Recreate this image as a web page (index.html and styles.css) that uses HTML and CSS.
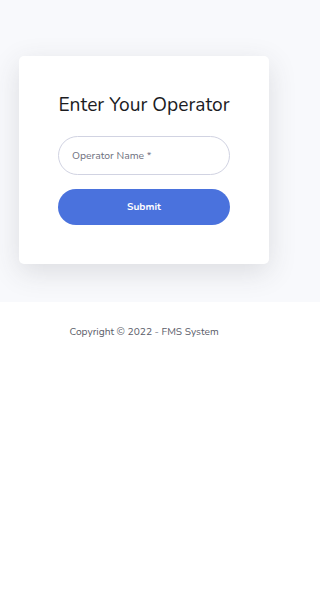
FILE: index.html
```html
<!DOCTYPE html>
<html>
<head>
<meta charset="utf-8">
<link rel="stylesheet" href="styles.css">
</head>
<body>
<main class="top">
  <div class="card">
    <h1 class="title">Enter Your Operator</h1>
    <form class="form">
      <input class="field" type="text" placeholder="Operator Name *">
      <button class="btn" type="button">Submit</button>
    </form>
  </div>
</main>
<footer class="footer">Copyright © 2022 - FMS System</footer>
</body>
</html>
```
FILE: styles.css
```css
html, body {
  margin: 0;
  padding: 0;
  background: #ffffff;
  font-family: "Nunito", "Lato", "Open Sans", sans-serif;
}
.top {
  background: #f8f9fc;
  padding: 56px 0 38px;
}
.card {
  box-sizing: border-box;
  width: 250px;
  margin-left: 19px;
  background: #ffffff;
  border-radius: 5px;
  box-shadow: 0 8px 28px rgba(58, 59, 69, 0.15);
  padding: 37px 39px 39px;
}
.title {
  margin: 0 0 19px;
  font-size: 19.2px;
  line-height: 24px;
  font-weight: 400;
  color: #1c1c1f;
  text-align: center;
  white-space: nowrap;
}
.form {
  display: flex;
  flex-direction: column;
  gap: 14px;
}
.field {
  box-sizing: border-box;
  height: 39px;
  width: 100%;
  border: 1px solid #d1d3e2;
  border-radius: 20px;
  padding: 0 13px;
  font-family: inherit;
  font-size: 10.4px;
  color: #6e707e;
  outline: none;
}
.field::placeholder {
  color: #6e707e;
}
.btn {
  height: 36px;
  width: 100%;
  border: none;
  border-radius: 18px;
  background: #4a72dd;
  color: #ffffff;
  font-family: inherit;
  font-size: 10.2px;
  font-weight: 700;
}
.footer {
  width: 288px;
  padding: 24px 0 0;
  text-align: center;
  font-size: 10.2px;
  line-height: 13px;
  color: #5a5c69;
}
```
